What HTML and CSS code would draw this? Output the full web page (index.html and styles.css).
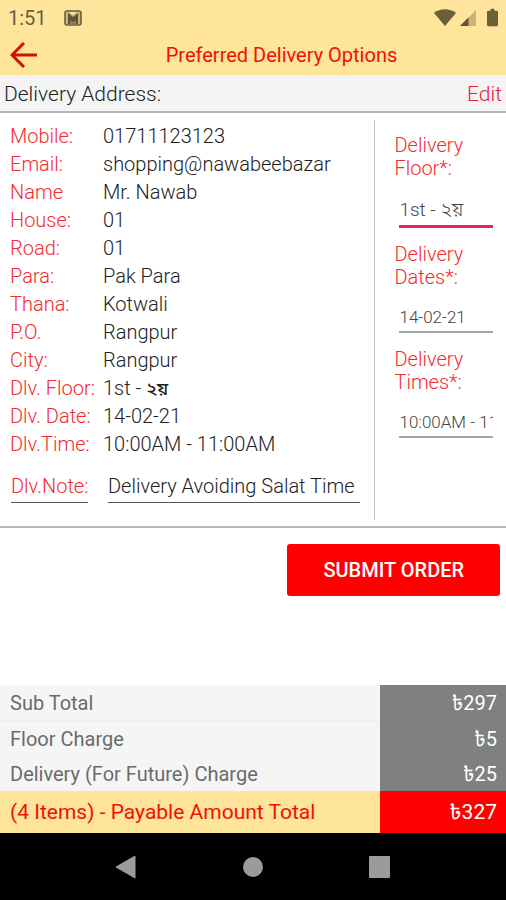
FILE: index.html
```html
<!DOCTYPE html>
<html lang="en">
  <head>
    <meta charset="UTF-8" />
    <meta name="viewport" content="width=device-width, initial-scale=1.0" />
    <title>Preferred Delivery Options</title>
    <link rel="stylesheet" href="styles.css">
  </head>
  <body>
    <header class="header">
      <div class="status-bar">
        <span class="clock">1:51</span>
        <svg class="mail-icon" width="18" height="16" viewBox="0 0 18 16">
          <rect x="1" y="1" width="16" height="14" rx="2" fill="#c9b67c" stroke="#6b603f" stroke-width="1.6" />
          <path d="M4 14V3l5 4 5-4v11z" fill="#5d5336" />
          <path d="M5 2h8L9 5z" fill="#ffe49b" />
          <path d="M6 14V10l3 2 3-2v4z" fill="#8d7f55" />
        </svg>
        <div class="status-icons">
          <svg width="22" height="17" viewBox="0 0 22 17">
            <path d="M11 17L0 4C6-1 16-1 22 4z" fill="#6b5f3a" />
          </svg>
          <svg width="16" height="16" viewBox="0 0 17 17">
            <path d="M17 0v17H0z" fill="#c9b27a" />
            <path d="M9 8v9H0z" fill="#6b4f35" />
          </svg>
          <svg width="11" height="19" viewBox="0 0 12 19">
            <path d="M4 0h4v2h3l1 1v15l-1 1H1l-1-1V3l1-1h3z" fill="#6b5f3a" />
          </svg>
        </div>
      </div>
      <div class="title-bar">
        <a class="back" href="#" aria-label="Back">
          <svg width="28" height="26" viewBox="0 0 28 26">
            <path d="M27 13H3M14 1L2 13l12 12" fill="none" stroke="#cf1200" stroke-width="3" />
          </svg>
        </a>
        <h1 class="title">Preferred Delivery Options</h1>
      </div>
    </header>

    <div class="address-bar">
      <h2 class="address-title">Delivery Address:</h2>
      <a class="edit" href="#">Edit</a>
    </div>

    <form class="form">
      <div class="details">
        <div class="address">
          <table class="address-table">
            <tr><th>Mobile:</th><td>01711123123</td></tr>
            <tr><th>Email:</th><td>shopping@nawabeebazar</td></tr>
            <tr><th>Name</th><td>Mr. Nawab</td></tr>
            <tr><th>House:</th><td>01</td></tr>
            <tr><th>Road:</th><td>01</td></tr>
            <tr><th>Para:</th><td>Pak Para</td></tr>
            <tr><th>Thana:</th><td>Kotwali</td></tr>
            <tr><th>P.O.</th><td>Rangpur</td></tr>
            <tr><th>City:</th><td>Rangpur</td></tr>
            <tr><th>Dlv. Floor:</th><td>1st - <span class="bn">২য়</span></td></tr>
            <tr><th>Dlv. Date:</th><td>14-02-21</td></tr>
            <tr><th>Dlv.Time:</th><td>10:00AM - 11:00AM</td></tr>
          </table>
          <div class="note">
            <label class="note-label" for="note">Dlv.Note:</label>
            <input class="note-input" type="text" id="note" value="Delivery Avoiding Salat Time" />
          </div>
        </div>
        <div class="options">
          <label class="option-label" for="floor">Delivery Floor*:</label>
          <input class="option-input active" type="text" id="floor" value="1st - ২য়" />
          <label class="option-label" for="date">Delivery Dates*:</label>
          <input class="option-input" type="text" id="date" value="14-02-21" />
          <label class="option-label" for="time">Delivery Times*:</label>
          <input class="option-input" type="text" id="time" value="10:00AM - 11:00AM" />
        </div>
      </div>
      <button class="submit" type="submit">SUBMIT ORDER</button>
    </form>

    <table class="totals">
      <tr class="first"><th>Sub Total</th><td>৳297</td></tr>
      <tr><th>Floor Charge</th><td>৳5</td></tr>
      <tr><th>Delivery (For Future) Charge</th><td>৳25</td></tr>
      <tr class="payable"><th>(4 Items) - Payable Amount Total</th><td>৳327</td></tr>
    </table>

    <nav class="nav-bar">
      <a href="#" aria-label="Back">
        <svg width="22" height="24" viewBox="0 0 22 24"><path d="M20 1v22L1 12z" fill="#9b9b9b" stroke="#9b9b9b" stroke-linejoin="round" /></svg>
      </a>
      <a href="#" aria-label="Home">
        <svg width="22" height="22" viewBox="0 0 22 22"><circle cx="11" cy="11" r="10" fill="#9b9b9b" /></svg>
      </a>
      <a href="#" aria-label="Recent">
        <svg width="22" height="22" viewBox="0 0 22 22"><rect width="21" height="22" rx="1" fill="#9b9b9b" /></svg>
      </a>
    </nav>
  </body>
</html>
```
FILE: styles.css
```css
* {
  box-sizing: border-box;
}

body {
  display: flex;
  flex-direction: column;
  min-height: 100vh;
  margin: 0;
  background-color: #fff;
  font-family: Roboto, "Noto Sans Bengali", sans-serif;
  font-size: 20px;
  font-weight: 300;
  color: #222;
}

a {
  text-decoration: none;
}

table {
  border-collapse: collapse;
}

th,
td {
  padding: 0;
  text-align: left;
  vertical-align: baseline;
  font-weight: inherit;
}

.header {
  background-color: #ffe49b;
}

.status-bar {
  display: flex;
  align-items: center;
  height: 35px;
  padding: 0 8px;
}

.clock {
  margin-right: 17px;
  font-weight: 400;
  color: #6b603f;
}

.status-icons {
  display: flex;
  align-items: center;
  gap: 4px;
  margin-left: auto;
}

.status-icons svg:last-child {
  margin-left: 7px;
}

.title-bar {
  display: flex;
  align-items: center;
  height: 40px;
  padding: 0 10px;
}

.back {
  display: flex;
}

.title {
  flex: 1;
  padding-left: 29px;
  margin: 0;
  text-align: center;
  font-size: 20px;
  font-weight: 400;
  color: #f41000;
}

.address-bar {
  display: flex;
  justify-content: space-between;
  align-items: center;
  height: 38px;
  padding: 2px 4px 0;
  border-bottom: 2px solid #b5b8b8;
  background-color: #f4f4f4;
}

.address-title {
  margin: 0;
  font-size: 21px;
  font-weight: 300;
}

.edit {
  font-size: 21px;
  color: #e8203a;
}

.details {
  display: flex;
  padding: 7px 0 6px;
  border-bottom: 2px solid #b9b9b9;
}

.address {
  flex: 1;
  min-width: 0;
  padding: 2px 14px 0 10px;
}

.address-table {
  width: 100%;
}

.address-table th,
.address-table td {
  height: 28px;
  line-height: 28px;
}

.address-table th {
  width: 93px;
  white-space: nowrap;
  color: #f52a30;
}

.bn {
  font-size: 18px;
  font-weight: 500;
  line-height: 20px;
}

.note {
  display: flex;
  gap: 20px;
  padding: 11px 0 17px 1px;
}

.note-label {
  width: 77px;
  height: 34px;
  border-bottom: 1px solid #555;
  line-height: 34px;
  color: #f52a30;
}

.note-input {
  flex: 1;
  min-width: 0;
  height: 34px;
}

input {
  padding: 0;
  border: 0;
  border-bottom: 1px solid #555;
  outline: none;
  background: none;
  font: inherit;
  color: inherit;
}

.options {
  display: flex;
  flex-direction: column;
  width: 26%;
  padding: 14px 13px 0 19px;
  border-left: 1px solid #c4c4c4;
}

.option-label {
  max-width: 90px;
  line-height: 23px;
  color: #f52a30;
}

.option-input {
  min-width: 0;
  height: 30px;
  margin: 14px 0 15px 5px;
  border-bottom: 2px solid #a5a5a5;
  font-size: 17px;
  color: #444;
}

.option-input.active {
  height: 34px;
  padding-top: 2px;
  border-bottom: 3px solid #e91e72;
  font-size: 19px;
}

.submit {
  display: block;
  width: 42%;
  height: 52px;
  margin: 16px 6px 0 auto;
  border: 0;
  border-radius: 3px;
  background-color: #ff0000;
  font-family: inherit;
  font-size: 20px;
  font-weight: 500;
  color: #fff;
}

.totals {
  width: 100%;
  margin-top: auto;
  font-weight: 400;
}

.totals th {
  width: 75%;
  height: 35px;
  padding: 1px 0 0 10px;
  background-color: #f5f5f5;
  line-height: 34px;
  color: #6b6b6b;
}

.totals .first th {
  border-bottom: 1px solid #eee;
}

.totals td {
  padding-right: 9px;
  background-color: #808080;
  text-align: right;
  line-height: 24px;
  color: #fff;
}

.totals .payable th {
  height: 42px;
  background-color: #ffe49b;
  font-size: 21px;
  line-height: 41px;
  color: #f41000;
}

.totals .payable td {
  background-color: #ff0000;
  font-size: 21px;
}

.nav-bar {
  display: flex;
  justify-content: space-evenly;
  align-items: center;
  height: 67px;
  padding: 0 10px;
  background-color: #000;
}

.nav-bar a {
  display: flex;
}
```
